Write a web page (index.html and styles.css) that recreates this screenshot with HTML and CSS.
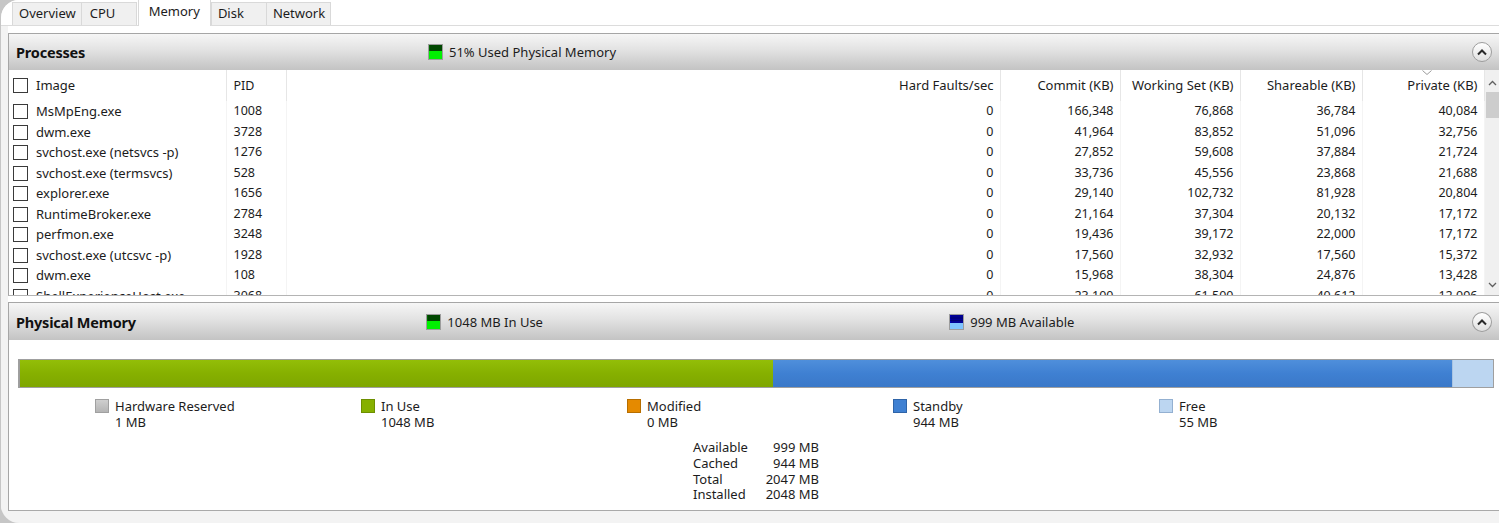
FILE: index.html
```html
<!DOCTYPE html>
<html lang="en">

<head>
    <meta charset="UTF-8">
    <meta name="viewport" content="width=device-width, initial-scale=1.0">
    <title>Resource Monitor - Memory</title>
    <link rel="stylesheet" href="styles.css">
</head>

<body>
    <div class="window">
        <div class="tabs">
            <div class="tab">Overview</div>
            <div class="tab">CPU</div>
            <div class="tab active">Memory</div>
            <div class="tab">Disk</div>
            <div class="tab">Network</div>
        </div>

        <div class="content">
            <!-- Processes -->
            <div class="panel processes">
                <div class="panel-head">
                    <div class="panel-title">Processes</div>
                    <div class="head-stat">
                        <svg class="mem-icon" width="15" height="16" viewBox="0 0 15 16">
                            <rect x="0.5" y="0.5" width="14" height="15" fill="#00f000" stroke="#9c9c9c" />
                            <rect x="1" y="1" width="13" height="6" fill="#006400" />
                            <path d="M3 1v6M5 1v6M7 1v6M9 1v6M11 1v6M13 1v6" stroke="#002a00" stroke-width="1" />
                        </svg>
                        <span>51% Used Physical Memory</span>
                    </div>
                    <div class="collapse">
                        <svg width="12" height="8" viewBox="0 0 12 8">
                            <path d="M2 6.5 L6 2.5 L10 6.5" fill="none" stroke="#2a2a2a" stroke-width="2" />
                        </svg>
                    </div>
                </div>

                <div class="grid">
                    <table class="proc-table">
                        <colgroup>
                            <col class="c-image">
                            <col class="c-pid">
                            <col class="c-faults">
                            <col class="c-num">
                            <col class="c-num">
                            <col class="c-num2">
                            <col class="c-num2">
                        </colgroup>
                        <thead>
                            <tr>
                                <th class="left"><span class="cb"></span>Image</th>
                                <th class="left">PID</th>
                                <th>Hard Faults/sec</th>
                                <th>Commit (KB)</th>
                                <th>Working Set (KB)</th>
                                <th>Shareable (KB)</th>
                                <th class="sorted">Private (KB)
                                    <svg class="sort-arrow" width="10" height="5" viewBox="0 0 10 5">
                                        <path d="M0.5 0.5 L5 4.5 L9.5 0.5" fill="none" stroke="#9a9a9a" stroke-width="1" />
                                    </svg>
                                </th>
                            </tr>
                        </thead>
                        <tbody>
                            <tr><td class="left"><span class="cb"></span>MsMpEng.exe</td><td class="left">1008</td><td>0</td><td>166,348</td><td>76,868</td><td>36,784</td><td>40,084</td></tr>
                            <tr><td class="left"><span class="cb"></span>dwm.exe</td><td class="left">3728</td><td>0</td><td>41,964</td><td>83,852</td><td>51,096</td><td>32,756</td></tr>
                            <tr><td class="left"><span class="cb"></span>svchost.exe (netsvcs -p)</td><td class="left">1276</td><td>0</td><td>27,852</td><td>59,608</td><td>37,884</td><td>21,724</td></tr>
                            <tr><td class="left"><span class="cb"></span>svchost.exe (termsvcs)</td><td class="left">528</td><td>0</td><td>33,736</td><td>45,556</td><td>23,868</td><td>21,688</td></tr>
                            <tr><td class="left"><span class="cb"></span>explorer.exe</td><td class="left">1656</td><td>0</td><td>29,140</td><td>102,732</td><td>81,928</td><td>20,804</td></tr>
                            <tr><td class="left"><span class="cb"></span>RuntimeBroker.exe</td><td class="left">2784</td><td>0</td><td>21,164</td><td>37,304</td><td>20,132</td><td>17,172</td></tr>
                            <tr><td class="left"><span class="cb"></span>perfmon.exe</td><td class="left">3248</td><td>0</td><td>19,436</td><td>39,172</td><td>22,000</td><td>17,172</td></tr>
                            <tr><td class="left"><span class="cb"></span>svchost.exe (utcsvc -p)</td><td class="left">1928</td><td>0</td><td>17,560</td><td>32,932</td><td>17,560</td><td>15,372</td></tr>
                            <tr><td class="left"><span class="cb"></span>dwm.exe</td><td class="left">108</td><td>0</td><td>15,968</td><td>38,304</td><td>24,876</td><td>13,428</td></tr>
                            <tr><td class="left"><span class="cb"></span>ShellExperienceHost.exe</td><td class="left">3068</td><td>0</td><td>23,100</td><td>61,500</td><td>40,612</td><td>12,096</td></tr>
                        </tbody>
                    </table>

                    <div class="vscroll">
                        <svg class="arrow" width="9" height="6" viewBox="0 0 9 6">
                            <path d="M1 5 L4.5 1.5 L8 5" fill="none" stroke="#606060" stroke-width="1.3" />
                        </svg>
                        <div class="thumb"></div>
                        <div class="track"></div>
                        <svg class="arrow" width="9" height="6" viewBox="0 0 9 6">
                            <path d="M1 1 L4.5 4.5 L8 1" fill="none" stroke="#606060" stroke-width="1.3" />
                        </svg>
                    </div>
                </div>
            </div>

            <!-- Physical Memory -->
            <div class="panel memory">
                <div class="panel-head">
                    <div class="panel-title">Physical Memory</div>
                    <div class="head-stat">
                        <svg class="mem-icon" width="15" height="16" viewBox="0 0 15 16">
                            <rect x="0.5" y="0.5" width="14" height="15" fill="#00f000" stroke="#9c9c9c" />
                            <rect x="1" y="1" width="13" height="6" fill="#006400" />
                            <path d="M3 1v6M5 1v6M7 1v6M9 1v6M11 1v6M13 1v6" stroke="#002a00" stroke-width="1" />
                        </svg>
                        <span>1048 MB In Use</span>
                    </div>
                    <div class="head-stat">
                        <svg class="mem-icon" width="15" height="16" viewBox="0 0 15 16">
                            <rect x="0.5" y="0.5" width="14" height="15" fill="#7fc4ff" stroke="#9c9c9c" />
                            <rect x="1" y="1" width="13" height="8" fill="#0000b4" />
                            <path d="M3 1v8M5 1v8M7 1v8M9 1v8M11 1v8M13 1v8M1 4h13M1 6.5h13" stroke="#000066" stroke-width="0.8" />
                        </svg>
                        <span>999 MB Available</span>
                    </div>
                    <div class="collapse">
                        <svg width="12" height="8" viewBox="0 0 12 8">
                            <path d="M2 6.5 L6 2.5 L10 6.5" fill="none" stroke="#2a2a2a" stroke-width="2" />
                        </svg>
                    </div>
                </div>

                <div class="mem-body">
                    <div class="mem-bar">
                        <div class="seg reserved" style="flex: 1"></div>
                        <div class="seg in-use" style="flex: 1048"></div>
                        <div class="seg modified" style="flex: 0"></div>
                        <div class="seg standby" style="flex: 944"></div>
                        <div class="seg free" style="flex: 55"></div>
                    </div>

                    <div class="legend">
                        <div class="legend-item">
                            <span class="swatch reserved"></span>
                            <div>Hardware Reserved<br>1 MB</div>
                        </div>
                        <div class="legend-item">
                            <span class="swatch in-use"></span>
                            <div>In Use<br>1048 MB</div>
                        </div>
                        <div class="legend-item">
                            <span class="swatch modified"></span>
                            <div>Modified<br>0 MB</div>
                        </div>
                        <div class="legend-item">
                            <span class="swatch standby"></span>
                            <div>Standby<br>944 MB</div>
                        </div>
                        <div class="legend-item">
                            <span class="swatch free"></span>
                            <div>Free<br>55 MB</div>
                        </div>
                    </div>

                    <div class="stats">
                        <span>Available</span><span class="val">999 MB</span>
                        <span>Cached</span><span class="val">944 MB</span>
                        <span>Total</span><span class="val">2047 MB</span>
                        <span>Installed</span><span class="val">2048 MB</span>
                    </div>
                </div>
            </div>
        </div>
    </div>
</body>

</html>
```

FILE: styles.css
```css
body {
    margin: 0;
    background-color: #c6c6c6;
    font-family: "Noto Sans", "Open Sans", sans-serif;
    font-size: 13px;
    color: #1c1c1c;
    overflow: hidden;
}

.window {
    height: 523px;
    background-color: #f3f3f3;
    border-radius: 18px 0 0 18px;
    margin-left: 1px;
    overflow: hidden;
}

/* Tabs */
.tabs {
    display: flex;
    align-items: flex-end;
    height: 26px;
    padding-left: 11px;
    background-color: #fff;
    border-bottom: 1px solid #dcdcdc;
    box-sizing: border-box;
}

.tab {
    min-width: 56px;
    height: 23px;
    line-height: 21px;
    padding: 0 5px 0 6px;
    box-sizing: border-box;
    background-color: #f0f0f0;
    border: 1px solid #d9d9d9;
    border-bottom: none;
    margin-right: -1px;
}

.tab:nth-child(2) {
    padding-left: 8px;
}

.tab.active {
    height: 27px;
    line-height: 22px;
    padding: 0 10px;
    margin: 0 0 0 2px;
    background-color: #fff;
    position: relative;
    top: 1px;
}

.content {
    padding-top: 7px;
    padding-left: 7px;
    background: linear-gradient(to right, #f3f3f3 7px, #fff 7px);
}

/* Panels */
.panel {
    border-top: 1px solid #a6a6a6;
    border-left: 1px solid #a6a6a6;
    background-color: #fff;
}

.panel-head {
    display: flex;
    align-items: center;
    height: 36px;
    padding: 0 7px;
    background: linear-gradient(#f6f6f6, #e2e2e2 45%, #c3c3c3);
}

.memory .panel-head {
    height: 37px;
}

.panel-title {
    width: 412px;
    font-size: 14.5px;
    font-weight: bold;
    color: #111;
    letter-spacing: -0.2px;
}

.head-stat {
    display: flex;
    align-items: center;
    gap: 6px;
    width: 525px;
}

.collapse {
    margin-left: auto;
    width: 20px;
    height: 20px;
    box-sizing: border-box;
    border: 1px solid #9d9d9d;
    border-radius: 50%;
    background: linear-gradient(#ffffff, #e0e0e0);
    display: flex;
    align-items: center;
    justify-content: center;
}

/* Process table */
.grid {
    display: flex;
    height: 225px;
    overflow: hidden;
}

.proc-table {
    table-layout: fixed;
    border-collapse: collapse;
    width: 1475px;
    flex: none;
}

.c-image { width: 217px; }
.c-pid { width: 60px; }
.c-faults { width: 714px; }
.c-num { width: 120px; }
.c-num2 { width: 122px; }

.proc-table th,
.proc-table td {
    padding: 0 6px 0 4px;
    text-align: right;
    white-space: nowrap;
    overflow: hidden;
    font-weight: normal;
}

.proc-table th {
    height: 31px;
    padding-bottom: 1px;
    box-sizing: border-box;
    border-right: 1px solid #e6e6e6;
}

.proc-table td {
    height: 20.5px;
    line-height: 20px;
    font-size: 12.5px;
    border-right: 1px solid #f4f4f4;
}

.proc-table td.left {
    font-size: 13px;
}

.proc-table .left {
    text-align: left;
}

.proc-table th.left + th.left,
.proc-table td.left + td.left {
    padding-left: 7px;
    font-size: 12.5px;
}

.sorted {
    position: relative;
}

.sort-arrow {
    position: absolute;
    top: 0;
    left: 59px;
}

.cb {
    display: inline-block;
    width: 13px;
    height: 13px;
    border: 1px solid #3a3a3a;
    background-color: #fff;
    vertical-align: middle;
    margin: -2px 8px 0 0;
}

.vscroll {
    width: 15px;
    flex: none;
    display: flex;
    flex-direction: column;
    align-items: center;
    background-color: #f0f0f0;
    padding: 10px 0 7px;
    box-sizing: border-box;
}

.thumb {
    width: 13px;
    height: 26px;
    margin-top: 6px;
    background-color: #cdcdcd;
}

.track {
    flex: 1;
}

.processes {
    border-bottom: 1px solid #b4b4b4;
}

.memory {
    margin-top: 6px;
}

/* Physical memory */
.mem-body {
    height: 171px;
    box-sizing: border-box;
    padding: 19px 5px 0 9px;
    border-bottom: 1px solid #a9a9a9;
}

.mem-bar {
    display: flex;
    height: 29px;
    border: 1px solid #9f9f9f;
    box-sizing: border-box;
}

.seg.reserved { background-color: #9d9d9d; }
.seg.in-use { background: linear-gradient(#93be08, #86b000 50%, #7ea600); }
.seg.modified { background-color: #e58a00; }
.seg.standby { background: linear-gradient(#4f8fdb, #3f80d2 50%, #3a78c8); }
.seg.free { background-color: #bcd6f1; border-left: 1px solid #a9c4e2; }

.legend {
    display: flex;
    padding-left: 77px;
    margin-top: 10px;
    line-height: 16px;
}

.legend-item {
    display: flex;
    gap: 6px;
    width: 266px;
}

.swatch {
    width: 14px;
    height: 14px;
    margin-top: 1px;
    box-sizing: border-box;
    border: 1px solid #8e8e8e;
    flex: none;
}

.swatch.reserved { background: linear-gradient(#cfcfcf, #b4b4b4); border-color: #a0a0a0; }
.swatch.in-use { background-color: #86b000; border-color: #6d8f00; }
.swatch.modified { background-color: #e58a00; border-color: #b76e00; }
.swatch.standby { background-color: #3f80d2; border-color: #2f64a8; }
.swatch.free { background-color: #bcd6f1; border-color: #93b0d1; }

.stats {
    display: grid;
    grid-template-columns: 72px 54px;
    margin: 10px 0 0 675px;
    line-height: 15.8px;
    white-space: nowrap;
}

.stats .val {
    text-align: right;
}
```
